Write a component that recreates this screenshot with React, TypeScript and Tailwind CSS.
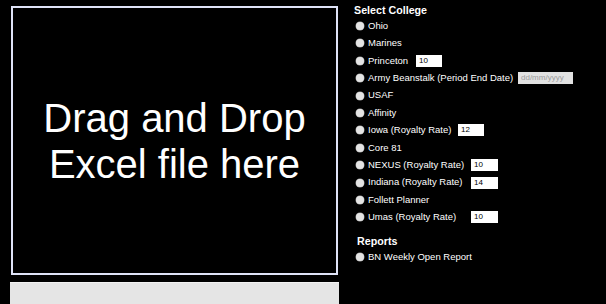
import React from 'react'

type College = {
    label: string
    labelWidth?: string
    input?: { value?: string; placeholder?: string; width: string; date?: boolean }
}

const colleges: College[] = [
    { label: 'Ohio' },
    { label: 'Marines' },
    { label: 'Princeton', labelWidth: 'w-[48px]', input: { value: '10', width: 'w-[26px]' } },
    {
        label: 'Army Beanstalk (Period End Date)',
        labelWidth: 'w-[150px]',
        input: { placeholder: 'dd/mm/yyyy', width: 'w-[55px]', date: true },
    },
    { label: 'USAF' },
    { label: 'Affinity' },
    { label: 'Iowa (Royalty Rate)', labelWidth: 'w-[90px]', input: { value: '12', width: 'w-[26px]' } },
    { label: 'Core 81' },
    { label: 'NEXUS (Royalty Rate)', labelWidth: 'w-[103px]', input: { value: '10', width: 'w-[27px]' } },
    { label: 'Indiana (Royalty Rate)', labelWidth: 'w-[103px]', input: { value: '14', width: 'w-[27px]' } },
    { label: 'Follett Planner' },
    { label: 'Umas (Royalty Rate)', labelWidth: 'w-[103px]', input: { value: '10', width: 'w-[27px]' } },
]

function Radio() {
    return <span className="mr-[4px] ml-[2px] h-[8px] w-[8px] shrink-0 rounded-full bg-[#e4e4e4] shadow-[0_0_0_0.5px_#9a9a9a]" />
}

function CollegeRow({ college }: { college: College }) {
    return (
        <div className="flex h-[17.4px] items-center">
            <Radio />
            <span className={`${college.labelWidth ?? ''} whitespace-nowrap`}>{college.label}</span>
            {college.input && (
                <input
                    readOnly
                    defaultValue={college.input.value}
                    placeholder={college.input.placeholder}
                    className={`${college.input.width} h-[12px] px-[3px] text-[8px] leading-[12px] text-black outline-none ${
                        college.input.date
                            ? 'bg-[#e2e2e2] text-[7px] placeholder:text-[#9c9c9c]'
                            : 'bg-white'
                    }`}
                />
            )}
        </div>
    )
}

export default function App() {
    return (
        <div className="flex h-[304px] w-[606px] overflow-hidden bg-black font-['Liberation_Sans',Arial,sans-serif] text-white">
            <div className="flex w-[350px] shrink-0 flex-col">
                <div className="mt-[6px] ml-[11px] flex h-[269px] w-[327px] items-center justify-center border-2 border-[#dfe3f7] bg-black">
                    <p className="text-center text-[40px] leading-[46px] text-white">
                        Drag and Drop
                        <br />
                        Excel file here
                    </p>
                </div>
                <div className="mt-[7px] ml-[10px] w-[329px] flex-1 border-t border-[#f2f2f2] bg-[#e5e5e5]" />
            </div>

            <div className="flex flex-col pt-[4px] pl-[4px] text-[9.5px]">
                <h2 className="h-[13.3px] text-[10.7px] leading-[13px] font-bold">Select College</h2>
                <div className="flex flex-col">
                    {colleges.map((college) => (
                        <CollegeRow key={college.label} college={college} />
                    ))}
                </div>
                <h2 className="mt-[8px] ml-[3px] h-[14px] text-[10.7px] leading-[14px] font-bold">Reports</h2>
                <div className="flex h-[17.4px] items-center">
                    <Radio />
                    <span className="whitespace-nowrap">BN Weekly Open Report</span>
                </div>
            </div>
        </div>
    )
}
